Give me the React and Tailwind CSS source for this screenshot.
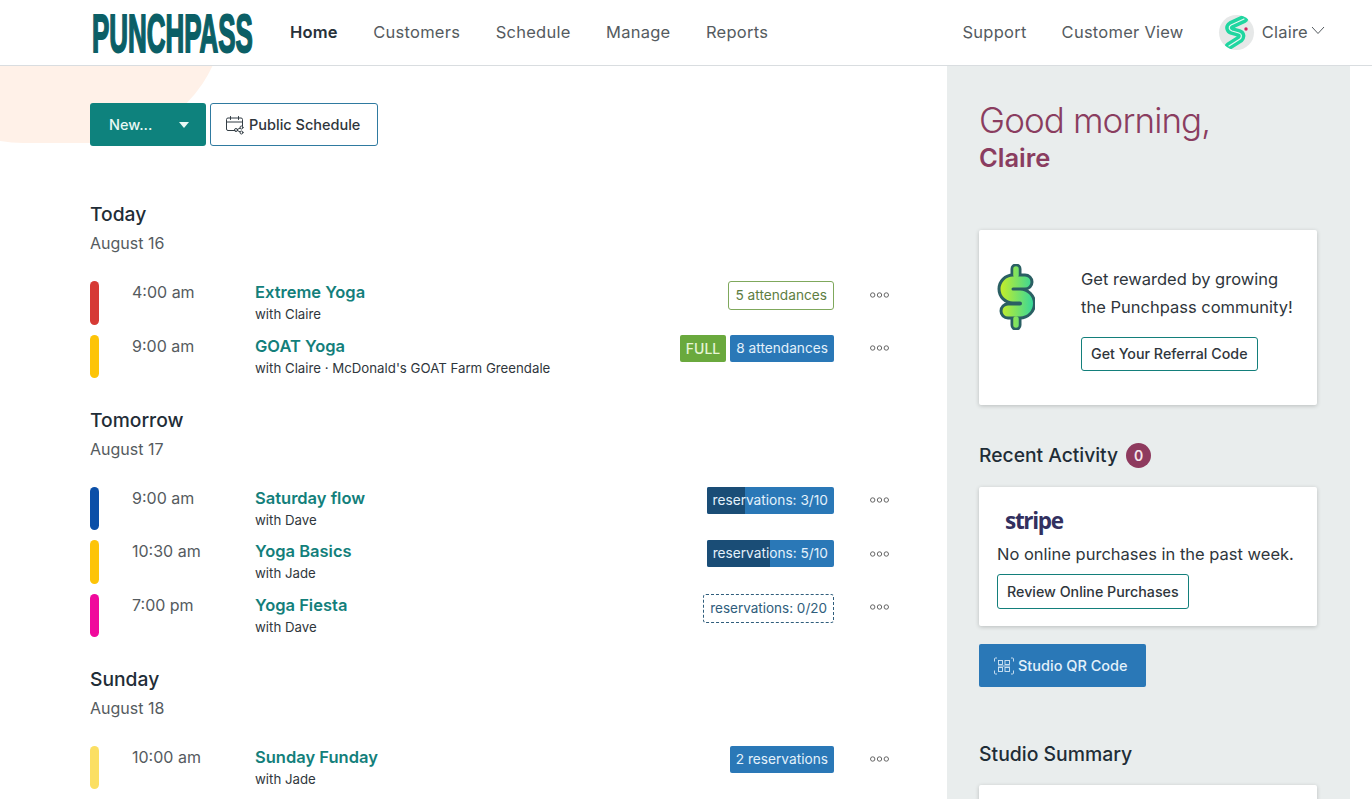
const days = [
  {
    title: 'Today',
    date: 'August 16',
    rows: [
      { color: 'bg-[#d63a35]', time: '4:00 am', name: 'Extreme Yoga', sub: 'with Claire', badges: [{ kind: 'outline', text: '5 attendances' }] },
      { color: 'bg-[#fdc408]', time: '9:00 am', name: 'GOAT Yoga', sub: "with Claire · McDonald's GOAT Farm Greendale", badges: [{ kind: 'full', text: 'FULL' }, { kind: 'solid', text: '8 attendances' }] },
    ],
  },
  {
    title: 'Tomorrow',
    date: 'August 17',
    rows: [
      { color: 'bg-[#0b4fa8]', time: '9:00 am', name: 'Saturday flow', sub: 'with Dave', badges: [{ kind: 'fill', text: 'reservations: 3/10', pct: 30 }] },
      { color: 'bg-[#fdc408]', time: '10:30 am', name: 'Yoga Basics', sub: 'with Jade', badges: [{ kind: 'fill', text: 'reservations: 5/10', pct: 50 }] },
      { color: 'bg-[#f0099c]', time: '7:00 pm', name: 'Yoga Fiesta', sub: 'with Dave', badges: [{ kind: 'dashed', text: 'reservations: 0/20' }] },
    ],
  },
  {
    title: 'Sunday',
    date: 'August 18',
    rows: [
      { color: 'bg-[#fbdf63]', time: '10:00 am', name: 'Sunday Funday', sub: 'with Jade', badges: [{ kind: 'solid', text: '2 reservations' }] },
    ],
  },
]

function Badge({ badge }) {
  if (badge.kind === 'outline') {
    return <span className="h-[29px] px-[6px] flex items-center rounded-[3px] border border-[#7fa85c] text-[#5d7d42] text-[13.7px]">{badge.text}</span>
  }
  if (badge.kind === 'dashed') {
    return <span className="h-[29px] px-[6px] flex items-center rounded-[3px] border border-dashed border-[#2f5d7c] text-[#2f5d7c] text-[13.5px]">{badge.text}</span>
  }
  if (badge.kind === 'full') {
    return <span className="h-[27px] px-[6px] flex items-center rounded-[2px] bg-[#6aa93d] text-[#e6f5d6] text-[14px] font-medium">{badge.text}</span>
  }
  if (badge.kind === 'fill') {
    return (
      <span className="relative h-[27px] px-[6px] flex items-center rounded-[2px] bg-[#2a78b7] text-[#e3f1fb] text-[13.7px] overflow-hidden">
        <span className="absolute left-0 top-0 bottom-0 bg-[#1a4d76]" style={{ width: `${badge.pct}%` }} />
        <span className="relative">{badge.text}</span>
      </span>
    )
  }
  return <span className="h-[27px] px-[6px] flex items-center rounded-[2px] bg-[#2a78b7] text-[#e3f1fb] text-[13.7px]">{badge.text}</span>
}

function Dots() {
  return (
    <svg width="19" height="6" viewBox="0 0 19 6" fill="none" stroke="#666" strokeWidth="1">
      <circle cx="2.7" cy="3" r="2.2" />
      <circle cx="9.5" cy="3" r="2.2" />
      <circle cx="16.3" cy="3" r="2.2" />
    </svg>
  )
}

function ClassRow({ row }) {
  return (
    <div className="flex h-[43.5px] items-start">
      <div className={`w-[9px] h-[43.5px] rounded-full shrink-0 ${row.color}`} />
      <div className="ml-[33px] w-[123px] shrink-0 text-[16px] leading-[22px] text-[#555b60]">{row.time}</div>
      <div className="flex-1 min-w-0">
        <p className="text-[16.5px] leading-[22px] font-semibold text-[#137f7b]">{row.name}</p>
        <p className="text-[13.25px] leading-[20px] mt-[1px] text-[#2f363c]">{row.sub}</p>
      </div>
      <div className="flex gap-[4px] items-center shrink-0">
        {row.badges.map((b) => <Badge key={b.text} badge={b} />)}
      </div>
      <div className="ml-[36px] w-[19px] h-[27px] flex items-center shrink-0"><Dots /></div>
    </div>
  )
}

function DaySection({ day }) {
  return (
    <section className="mb-[27.5px]">
      <h2 className="text-[19.25px] leading-[28px] font-medium text-[#1f2d37]">{day.title}</h2>
      <p className="mt-[2px] text-[16px] leading-[26px] text-[#555b60]">{day.date}</p>
      <div className="mt-[25px] flex flex-col gap-[10px]">
        {day.rows.map((r) => <ClassRow key={r.name} row={r} />)}
      </div>
    </section>
  )
}

function CalendarShareIcon() {
  return (
    <svg width="20" height="20" viewBox="0 0 20 20" fill="none" stroke="#333d44" strokeWidth="1" strokeLinecap="round">
      <path d="M10 15.5H3a1.5 1.5 0 0 1-1.5-1.5V4.5A1.5 1.5 0 0 1 3 3h13a1.5 1.5 0 0 1 1.5 1.5V11" />
      <path d="M1.5 7h16M5.5 1.5v3M13.5 1.5v3" />
      <circle cx="11" cy="15" r="1.5" />
      <circle cx="16.5" cy="12.5" r="1.5" />
      <circle cx="16.5" cy="17.5" r="1.5" />
      <path d="M12.4 14.4l2.8-1.3M12.4 15.6l2.8 1.3" />
    </svg>
  )
}

function QrIcon() {
  return (
    <svg width="20" height="18" viewBox="0 0 20 18" fill="none" stroke="#d6e8f6" strokeWidth="0.9">
      <path d="M3 1H1.5a1 1 0 0 0-1 1v2.5M17 1h1.5a1 1 0 0 1 1 1v2.5M3 17H1.5a1 1 0 0 1-1-1v-2.5M17 17h1.5a1 1 0 0 0 1-1v-2.5" />
      <rect x="4.5" y="3.5" width="4" height="4" />
      <rect x="11" y="3.5" width="4.5" height="4" />
      <path d="M4 9h12" />
      <rect x="4.5" y="10.5" width="4" height="4" />
      <rect x="11" y="10.5" width="4.5" height="4" />
    </svg>
  )
}

function DollarIcon() {
  const s = 'M28 18H16a7 7 0 0 0 0 14h7a7.5 7.5 0 0 1 0 15H11'
  const stems = 'M19 5v6M19 55v6'
  return (
    <svg width="38" height="66" viewBox="0 0 38 66" fill="none" strokeLinecap="round" strokeLinejoin="round">
      <defs>
        <linearGradient id="dollarFill" gradientUnits="userSpaceOnUse" x1="0" y1="0" x2="38" y2="0">
          <stop offset="0" stopColor="#d4f01e" />
          <stop offset="1" stopColor="#2fd6a0" />
        </linearGradient>
      </defs>
      <path d={stems} stroke="#2a5f63" strokeWidth="11" />
      <path d={s} stroke="#2a5f63" strokeWidth="17" />
      <path d={stems} stroke="url(#dollarFill)" strokeWidth="5.5" />
      <path d={s} stroke="url(#dollarFill)" strokeWidth="11" />
    </svg>
  )
}

function Avatar() {
  const band = 'M25 4L12 10c-3 2-2 5 1 6l7 2c3 1 3 4 1 6l-11 7'
  return (
    <div className="w-[35px] h-[35px] rounded-full bg-[#e6e8e8] flex items-center justify-center overflow-hidden shrink-0">
      <svg width="35" height="35" viewBox="0 0 35 35" fill="none" strokeLinecap="round" strokeLinejoin="round">
        <path d={band} stroke="#1fd6a0" strokeWidth="8" />
        <path d={band} stroke="#e6f8f2" strokeWidth="1.2" />
        <circle cx="27" cy="14" r="1.7" fill="#d3235f" />
      </svg>
    </div>
  )
}

const navLink = 'text-[16.5px] text-[#555b60] tracking-[0.25px]'

export default function App() {
  return (
    <div className="h-screen overflow-hidden bg-white font-['Inter',sans-serif] text-[#2f363c]">
      <header className="h-[66px] border-b border-[#d9dde0] flex items-center pl-[92px] pr-[47px]">
        <div className="w-[161px] h-[40px] shrink-0 flex items-center overflow-visible">
          <span className="origin-left scale-x-[0.48] font-['Liberation_Sans',sans-serif] font-bold text-[54px] leading-none whitespace-nowrap text-[#0b5f66] [-webkit-text-stroke:2px_#0b5f66]">PUNCHPASS</span>
        </div>
        <nav className="ml-[37px] flex items-center gap-[35.5px]">
          <a className="text-[16.5px] font-semibold text-[#27313a] tracking-[0.2px]">Home</a>
          <a className={navLink}>Customers</a>
          <a className={navLink}>Schedule</a>
          <a className={navLink}>Manage</a>
          <a className={navLink}>Reports</a>
        </nav>
        <div className="ml-auto flex items-center">
          <a className={navLink}>Support</a>
          <a className={`${navLink} ml-[35px]`}>Customer View</a>
          <div className="ml-[35px]"><Avatar /></div>
          <a className={`${navLink} ml-[8px]`}>Claire</a>
          <svg className="ml-[3px] mb-[5px]" width="14" height="9" viewBox="0 0 14 9" fill="none" stroke="#555b60" strokeWidth="1">
            <path d="M1 1l6 6.5L13 1" />
          </svg>
        </div>
      </header>

      <div className="flex h-[733px]">
        <main className="relative w-[947px] shrink-0 overflow-hidden pl-[90px] pr-[58px] pt-[37px]">
          <div className="absolute left-[-110px] top-[-190px] w-[335px] h-[267px] rounded-full bg-[#fff1e8]" />
          <div className="relative flex gap-[4px]">
            <button className="w-[116px] h-[43px] rounded-[3px] bg-[#0e827d] text-[#e9f8f5] text-[14.5px] font-medium flex items-center pl-[19px] pr-[17px] justify-between">
              New...
              <svg width="10" height="6" viewBox="0 0 10 6" fill="#e9f8f5"><path d="M0 0h10L5 6z" /></svg>
            </button>
            <button className="h-[43px] w-[168px] rounded-[3px] border border-[#2f7aa0] bg-white text-[#2f363c] text-[14.5px] font-medium flex items-center pl-[14px] gap-[4px]">
              <CalendarShareIcon />
              Public Schedule
            </button>
          </div>
          <div className="relative mt-[54px]">
            {days.map((d) => <DaySection key={d.title} day={d} />)}
          </div>
        </main>

        <aside className="w-[403px] shrink-0 bg-[#e9eded] pl-[32px] pr-[33px] pt-[32px]">
          <h1 className="text-[35px] leading-[44px] font-light tracking-[-0.9px] text-[#8a3d60]">Good morning,</h1>
          <p className="text-[25.5px] leading-[32px] font-semibold text-[#8a3d60]">Claire</p>

          <div className="mt-[56px] h-[175px] bg-white rounded-[2px] shadow-[0_1px_4px_rgba(0,0,0,0.2)] flex pl-[18px] pt-[34px]">
            <DollarIcon />
            <div className="ml-[46px] mt-[1px]">
              <p className="text-[16.5px] leading-[28px] text-[#2f363c] whitespace-nowrap">Get rewarded by growing<br />the Punchpass community!</p>
              <button className="mt-[16px] h-[34px] px-[9px] rounded-[3px] border border-[#137f7b] text-[14.25px] font-medium text-[#2f363c]">Get Your Referral Code</button>
            </div>
          </div>

          <div className="mt-[36px] flex items-center gap-[8px] h-[28px]">
            <h3 className="text-[19.25px] font-medium text-[#1f2d37]">Recent Activity</h3>
            <span className="w-[25px] h-[25px] rounded-full bg-[#8e3a5e] text-[#f5e6ec] text-[14px] font-semibold flex items-center justify-center">0</span>
          </div>

          <div className="mt-[18px] h-[139px] bg-white rounded-[2px] shadow-[0_1px_4px_rgba(0,0,0,0.2)] px-[18px] pt-[18px]">
            <p className="ml-[8px] font-['Open_Sans',sans-serif] text-[22.5px] leading-[32px] font-bold tracking-[-1.3px] text-[#32305f]">stripe</p>
            <p className="mt-[5px] text-[16.5px] leading-[24px] text-[#2f363c] whitespace-nowrap">No online purchases in the past week.</p>
            <button className="mt-[8px] h-[35px] px-[9px] rounded-[3px] border border-[#137f7b] text-[14.25px] font-medium text-[#2f363c]">Review Online Purchases</button>
          </div>

          <button className="mt-[18px] h-[43px] w-[167px] rounded-[2px] bg-[#2a78b7] text-[#e3f1fb] text-[14.5px] font-medium flex items-center pl-[15px] gap-[4px]">
            <QrIcon />
            Studio QR Code
          </button>

          <h3 className="mt-[53px] text-[19.4px] leading-[28px] font-medium text-[#1f2d37]">Studio Summary</h3>
          <div className="mt-[17px] h-[120px] bg-white rounded-[2px] shadow-[0_1px_4px_rgba(0,0,0,0.2)]" />
        </aside>
      </div>
    </div>
  )
}
